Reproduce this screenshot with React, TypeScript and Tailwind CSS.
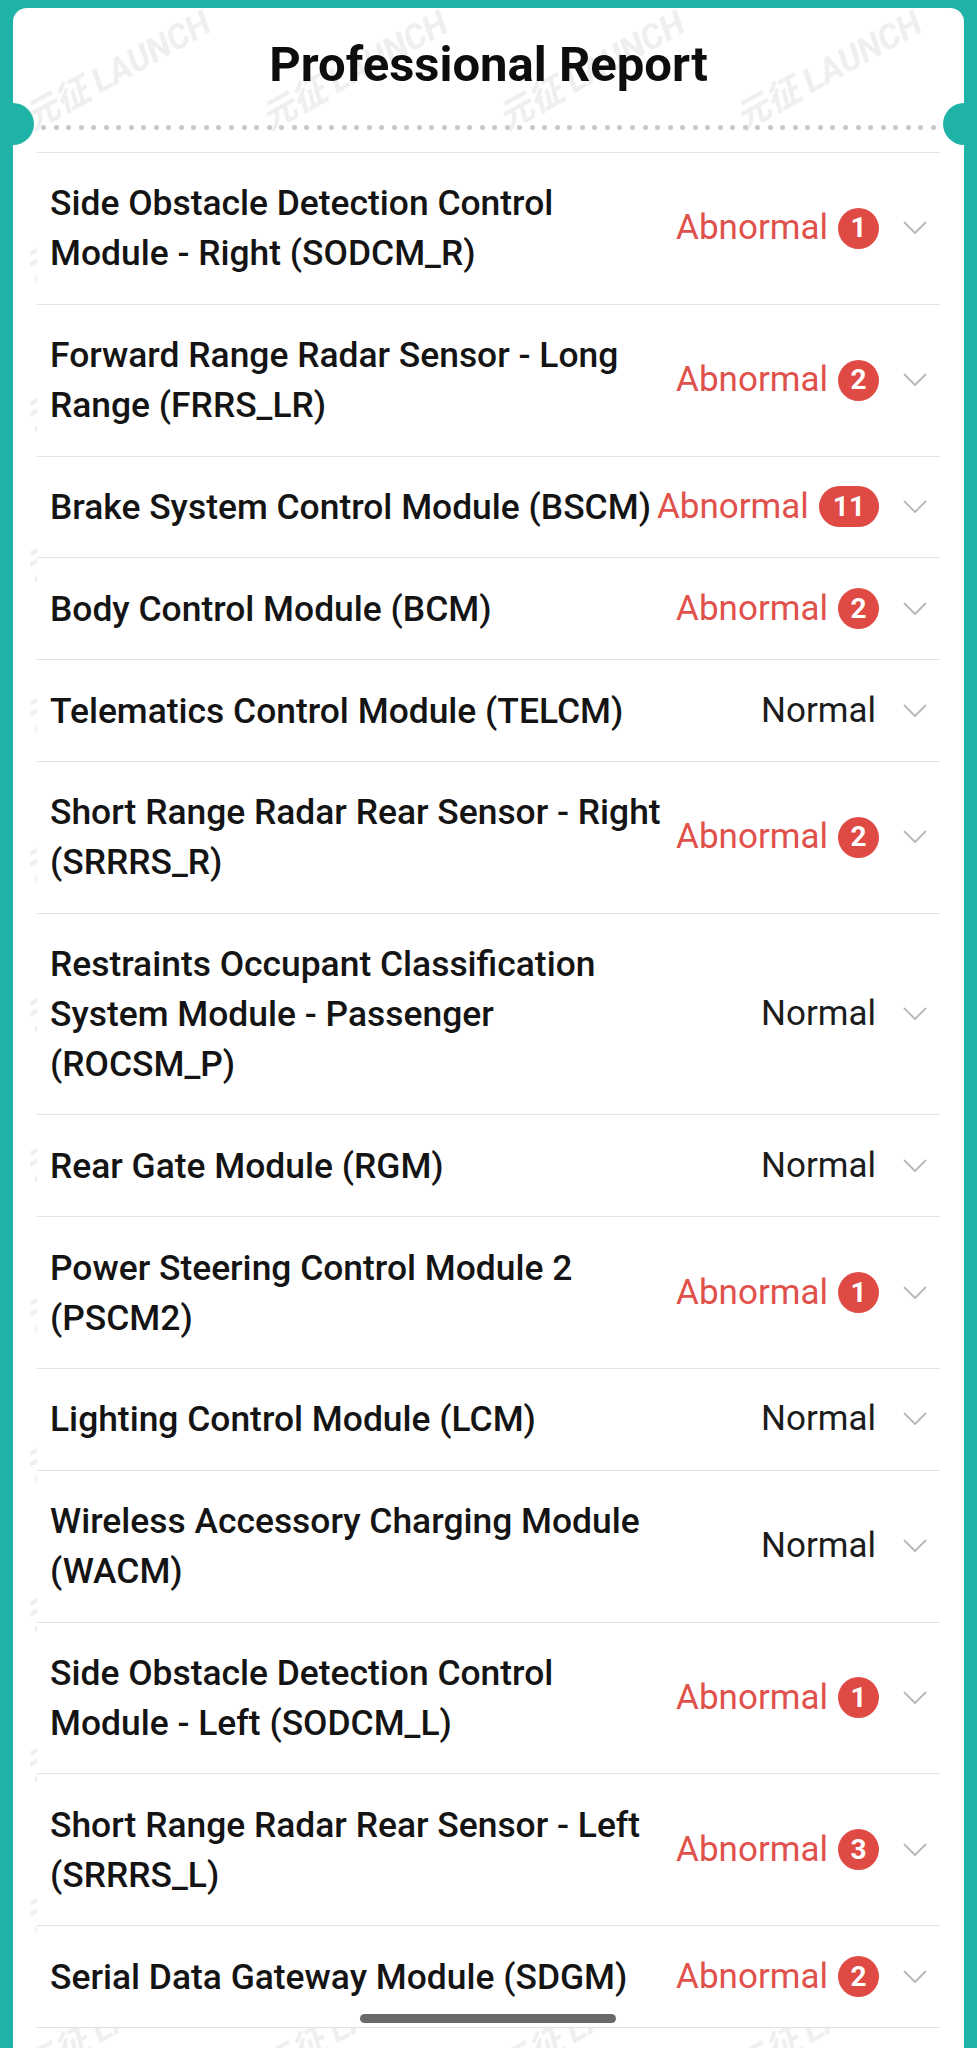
import React from 'react';

interface ModuleRow {
  name: string;
  count?: number;
}

const rows: ModuleRow[] = [
  { name: 'Side Obstacle Detection Control Module - Right (SODCM_R)', count: 1 },
  { name: 'Forward Range Radar Sensor - Long Range (FRRS_LR)', count: 2 },
  { name: 'Brake System Control Module (BSCM)', count: 11 },
  { name: 'Body Control Module (BCM)', count: 2 },
  { name: 'Telematics Control Module (TELCM)' },
  { name: 'Short Range Radar Rear Sensor - Right (SRRRS_R)', count: 2 },
  { name: 'Restraints Occupant Classification System Module - Passenger (ROCSM_P)' },
  { name: 'Rear Gate Module (RGM)' },
  { name: 'Power Steering Control Module 2 (PSCM2)', count: 1 },
  { name: 'Lighting Control Module (LCM)' },
  { name: 'Wireless Accessory Charging Module (WACM)' },
  { name: 'Side Obstacle Detection Control Module - Left (SODCM_L)', count: 1 },
  { name: 'Short Range Radar Rear Sensor - Left (SRRRS_L)', count: 3 },
  { name: 'Serial Data Gateway Module (SDGM)', count: 2 },
];

const Chevron = () => (
  <svg width="24" height="14" viewBox="0 0 24 14" fill="none" className="shrink-0">
    <path d="M1.5 1.5 L12 12 L22.5 1.5" stroke="#b8b8b8" strokeWidth="1.8" strokeLinecap="round" strokeLinejoin="round" />
  </svg>
);

// faint "元征 LAUNCH" watermark grid behind the card
const Watermarks = () => {
  const marks: { x: number; y: number }[] = [];
  for (let r = 0; r < 14; r++) {
    for (let c = 0; c < 5; c++) {
      marks.push({ x: 14 + c * 237, y: 92 + r * 150 });
    }
  }
  return (
    <div className="absolute inset-0 pointer-events-none overflow-hidden">
      {marks.map((m, i) => (
        <span
          key={i}
          className="absolute whitespace-nowrap text-[34px] leading-[40px] font-bold italic text-[#efefef] -rotate-[29deg] origin-left"
          style={{ left: m.x, top: m.y }}
        >
          元征 LAUNCH
        </span>
      ))}
    </div>
  );
};

function Row({ name, count }: ModuleRow) {
  const abnormal = count !== undefined;
  return (
    <div className="flex items-center border-b border-[#e2e2e2] bg-white py-[25.4px] pl-[13px] pr-[13px]">
      <div className="flex-1 min-w-0 max-w-[622px] text-[35.4px] leading-[50px] font-medium text-[#141414]">{name}</div>
      <div className="flex items-center shrink-0 ml-auto pl-[3px]">
        {abnormal ? (
          <>
            <span className="text-[35px] leading-[50px] text-[#e0514c]">Abnormal</span>
            <span
              className={`ml-[10px] h-[41px] min-w-[41px] rounded-full bg-[#e04a44] text-white text-[28px] font-bold flex items-center justify-center leading-none ${
                count >= 10 ? 'px-[14px]' : 'px-[11px]'
              }`}
            >
              {count}
            </span>
          </>
        ) : (
          <span className="text-[35px] leading-[50px] text-[#1c1c1c] mr-[3px]">Normal</span>
        )}
        <span className="ml-[24px]">
          <Chevron />
        </span>
      </div>
    </div>
  );
}

export default function App() {
  const dots = Array.from({ length: 72 });
  return (
    <div
      className="relative w-[977px] h-[2048px] overflow-hidden bg-[#1fb2a6] pt-[8px] px-[13px]"
      style={{ fontFamily: 'Roboto, "Noto Sans CJK SC", sans-serif' }}
    >
      <div className="relative h-full bg-white rounded-t-[14px] overflow-hidden">
        <Watermarks />
        <div className="absolute left-[-21px] top-[95px] w-[42px] h-[42px] rounded-full bg-[#1fb2a6]" />
        <div className="absolute right-[-21px] top-[95px] w-[42px] h-[42px] rounded-full bg-[#1fb2a6]" />

        <div className="relative h-[112px] flex items-center justify-center">
          <h1 className="text-[49px] font-bold text-[#0d0d0d] leading-none">Professional Report</h1>
        </div>
        <div className="relative mx-[28px] h-[14px] flex items-center justify-between">
          {dots.map((_, i) => (
            <span key={i} className="w-[5px] h-[5px] rounded-full bg-[#c9c9c9]" />
          ))}
        </div>
        <div className="relative mx-[24px] mt-[18px] border-t border-[#e2e2e2]">
          {rows.map((r) => (
            <Row key={r.name} {...r} />
          ))}
        </div>

        <div className="absolute bottom-[25px] left-[347px] w-[256px] h-[9px] rounded-full bg-[#6a6a6a]" />
      </div>
    </div>
  );
}
